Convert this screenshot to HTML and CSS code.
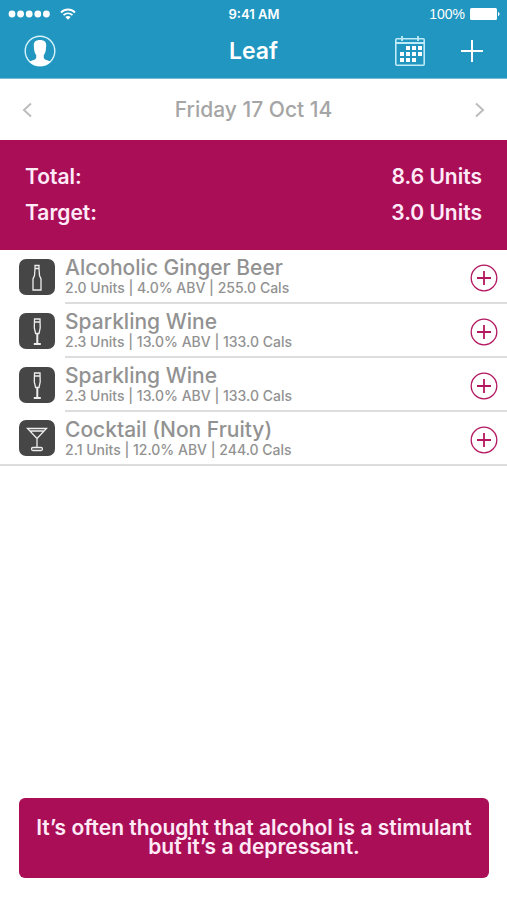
FILE: index.html
```html
<!DOCTYPE html>
<html lang="en">
<head>
<meta charset="utf-8">
<meta name="viewport" content="width=device-width, initial-scale=1">
<title>Leaf</title>
<link rel="stylesheet" href="styles.css">
</head>
<body>
<svg class="defs" aria-hidden="true">
  <symbol id="bottle" viewBox="0 0 36 36"><path d="M16 6.500h4v3l.5 7 1.500 3.500v11h-8V20l1.500-3.500.5-7zM16 9.500h4"/></symbol>
  <symbol id="flute" viewBox="0 0 36 36"><path d="M15.500 6h5.500l.2 9-1.200 5.500h-3.400L15.300 15zM15.500 9h5.500"/><path d="M18.300 20.500V30M14.800 31h7" stroke-width="2"/></symbol>
  <symbol id="martini" viewBox="0 0 36 36"><path d="M8.500 8.500h19L18 18.500zM11.500 11h13M18 18.500V28"/><rect x="12.500" y="27.500" width="11" height="3" rx="1.500"/></symbol>
  <symbol id="add" viewBox="0 0 28 28"><circle cx="14" cy="14" r="12.800" stroke-width="1.300"/><path d="M14 7v14M7 14h14" stroke-width="1.800"/></symbol>
</svg>
<div class="app">
  <header class="header">
    <div class="status">
      <div class="signal">
        <svg width="42" height="10" viewBox="0 0 42 10" fill="#fff" aria-hidden="true"><circle cx="4" cy="5" r="3.400"/><circle cx="12.600" cy="5" r="3.400"/><circle cx="21.200" cy="5" r="3.400"/><circle cx="29.800" cy="5" r="3.400"/><circle cx="38.400" cy="5" r="3.400"/></svg>
        <svg width="16" height="12" viewBox="0 0 16 12" fill="none" stroke="#fff" stroke-width="1.800" aria-hidden="true"><path d="M1 4.500c4-4 10-4 14 0M3.500 7.200c2.600-2.500 6.400-2.500 9 0"/><path d="M5.300 9c1.600-1.500 3.800-1.500 5.400 0L8 11.800z" fill="#fff" stroke="none"/></svg>
      </div>
      <span class="clock">9:41 AM</span>
      <div class="power">
        <span>100%</span>
        <svg width="30" height="12" viewBox="0 0 30 12" fill="#fff" aria-hidden="true"><rect width="27" height="12" rx="1.500"/><path d="M28 4c2 .5 2 3.500 0 4z"/></svg>
      </div>
    </div>
    <nav class="navbar">
      <div class="side">
        <button class="icon-button" aria-label="Profile">
          <svg width="32" height="32" viewBox="0 0 32 32" aria-hidden="true"><circle cx="16" cy="16" r="14.800" fill="none" stroke="#d8f3fb" stroke-width="1.400"/><path d="M16 5c4.500 0 6.500 2 6.200 6l-.4 4c-.3 2.500-1.200 4-2 5-.4 3 .2 4 2 4.800 1.800.7 3.600 1.200 4.700 2.200A15 15 0 0 1 16 31 15 15 0 0 1 5.500 27c1.100-1 2.900-1.500 4.700-2.200 1.800-.8 2.400-1.800 2-4.800-.8-1-1.700-2.500-2-5l-.4-4C9.500 7 11.500 5 16 5z" fill="#fff"/></svg>
        </button>
      </div>
      <h1>Leaf</h1>
      <div class="side end">
        <button class="icon-button" aria-label="Calendar">
          <svg width="32" height="32" viewBox="0 0 32 32" aria-hidden="true"><rect x="1.800" y="3.800" width="28.400" height="26.400" rx="1" fill="none" stroke="#bfeaf8" stroke-width="1.600"/><path d="M2 8h28M8 1v5M24 1v5" fill="none" stroke="#bfeaf8" stroke-width="1.800"/><path d="M12 11h4v4h-4zM18 11h4v4h-4zM24 11h4v4h-4zM6 17h4v4H6zM12 17h4v4h-4zM18 17h4v4h-4zM24 17h4v4h-4zM6 23h4v4H6zM12 23h4v4h-4zM18 23h4v4h-4z" fill="#fff"/></svg>
        </button>
        <button class="icon-button" aria-label="Add drink">
          <svg width="22" height="22" viewBox="0 0 22 22" aria-hidden="true"><path d="M11 0v22M0 11h22" stroke="#fff" stroke-width="2"/></svg>
        </button>
      </div>
    </nav>
  </header>
  <main class="content">
    <div class="date">
      <button class="icon-button" aria-label="Previous day"><svg width="12" height="16" viewBox="0 0 12 16" aria-hidden="true"><path d="M10 1.500L3 8l7 6.500"/></svg></button>
      <h2>Friday 17 Oct 14</h2>
      <button class="icon-button" aria-label="Next day"><svg width="12" height="16" viewBox="0 0 12 16" aria-hidden="true"><path d="M2 1.500L9 8l-7 6.500"/></svg></button>
    </div>
    <dl class="summary">
      <div><dt>Total:</dt><dd>8.6 Units</dd></div>
      <div><dt>Target:</dt><dd>3.0 Units</dd></div>
    </dl>
    <ul class="drinks">
      <li>
        <svg class="drink-icon" aria-hidden="true"><use href="#bottle"/></svg>
        <div class="drink"><div class="text"><h3>Alcoholic Ginger Beer</h3><p>2.0 Units | 4.0% ABV | 255.0 Cals</p></div>
        <button class="icon-button" aria-label="Add Alcoholic Ginger Beer"><svg class="add"><use href="#add"/></svg></button></div>
      </li>
      <li>
        <svg class="drink-icon" aria-hidden="true"><use href="#flute"/></svg>
        <div class="drink"><div class="text"><h3>Sparkling Wine</h3><p>2.3 Units | 13.0% ABV | 133.0 Cals</p></div>
        <button class="icon-button" aria-label="Add Sparkling Wine"><svg class="add"><use href="#add"/></svg></button></div>
      </li>
      <li>
        <svg class="drink-icon" aria-hidden="true"><use href="#flute"/></svg>
        <div class="drink"><div class="text"><h3>Sparkling Wine</h3><p>2.3 Units | 13.0% ABV | 133.0 Cals</p></div>
        <button class="icon-button" aria-label="Add Sparkling Wine"><svg class="add"><use href="#add"/></svg></button></div>
      </li>
      <li>
        <svg class="drink-icon" aria-hidden="true"><use href="#martini"/></svg>
        <div class="drink"><div class="text"><h3>Cocktail (Non Fruity)</h3><p>2.1 Units | 12.0% ABV | 244.0 Cals</p></div>
        <button class="icon-button" aria-label="Add Cocktail (Non Fruity)"><svg class="add"><use href="#add"/></svg></button></div>
      </li>
    </ul>
  </main>
  <p class="tip">It’s often thought that alcohol is a stimulant but it’s a depressant.</p>
</div>
</body>
</html>
```
FILE: styles.css
```css
* { box-sizing: border-box; margin: 0; padding: 0; }

body {
  font-family: Inter, "Liberation Sans", sans-serif;
  font-size: 21px;
  font-weight: 500;
  line-height: 24px;
  color: #929292;
  background: #fff;
}

.defs { display: none; }
svg { display: block; flex: none; }
h1, h2, h3 { font-size: 21px; font-weight: 500; }
ul { list-style: none; }

.app { min-height: 100vh; display: flex; flex-direction: column; }
.content { flex: 1; }

.icon-button {
  display: flex;
  border: 0;
  background: none;
  color: inherit;
  cursor: pointer;
}

.header { background: #2196c0; color: #fff; padding-bottom: 11px; border-bottom: 1px solid #74bcd6; }

.status {
  display: grid;
  grid-template-columns: 1fr auto 1fr;
  align-items: center;
  height: 27px;
  padding: 0 7px 0 8px;
  font-family: "Liberation Sans", sans-serif;
  font-size: 14px;
}
.signal, .power { display: flex; align-items: center; }
.signal { gap: 10px; }
.power { justify-content: flex-end; gap: 5px; font-weight: 400; }
.clock { font-family: Inter, sans-serif; font-weight: 600; font-size: 13px; }

.navbar {
  display: grid;
  grid-template-columns: 1fr auto 1fr;
  align-items: center;
  height: 40px;
  padding: 8px 24px 0;
}
.navbar h1 { font-size: 23px; font-weight: 600; }
.side { display: flex; align-items: center; }
.end { justify-content: flex-end; gap: 35px; }

.date {
  display: flex;
  align-items: center;
  justify-content: space-between;
  height: 61px;
  padding: 0 21px;
  color: #a5a5a5;
}
.date svg { fill: none; stroke: #bdbdbd; stroke-width: 2; }

.summary {
  display: grid;
  gap: 12px;
  padding: 25px;
  background: #aa0e57;
  color: #ffeaf7;
  font-weight: 600;
}
.summary div { display: flex; justify-content: space-between; }

.drinks li { display: flex; align-items: center; gap: 10px; height: 54px; padding-left: 19px; }
.drinks li:last-child { border-bottom: 2px solid #ddd; }
.drinks li:last-child .drink { border-bottom: 0; }
.drink-icon {
  width: 36px;
  height: 36px;
  border-radius: 7px;
  background: #464646;
  fill: none;
  stroke: #eee;
  stroke-width: 1.3px;
}
.drink {
  flex: 1;
  align-self: stretch;
  display: flex;
  align-items: center;
  justify-content: space-between;
  padding: 3px 9px 0 0;
  border-bottom: 2px solid #ddd;
}
.text { padding-bottom: 4px; }
.drink p { font-size: 14px; line-height: 16px; }
.add { width: 28px; height: 28px; fill: none; stroke: #b3175f; }

.tip {
  margin: 0 18px 22px 19px;
  padding: 20px 9px 22px;
  border-radius: 6px;
  background: #aa0e57;
  color: #ffeaf7;
  font-weight: 600;
  line-height: 19px;
  text-align: center;
}
```
